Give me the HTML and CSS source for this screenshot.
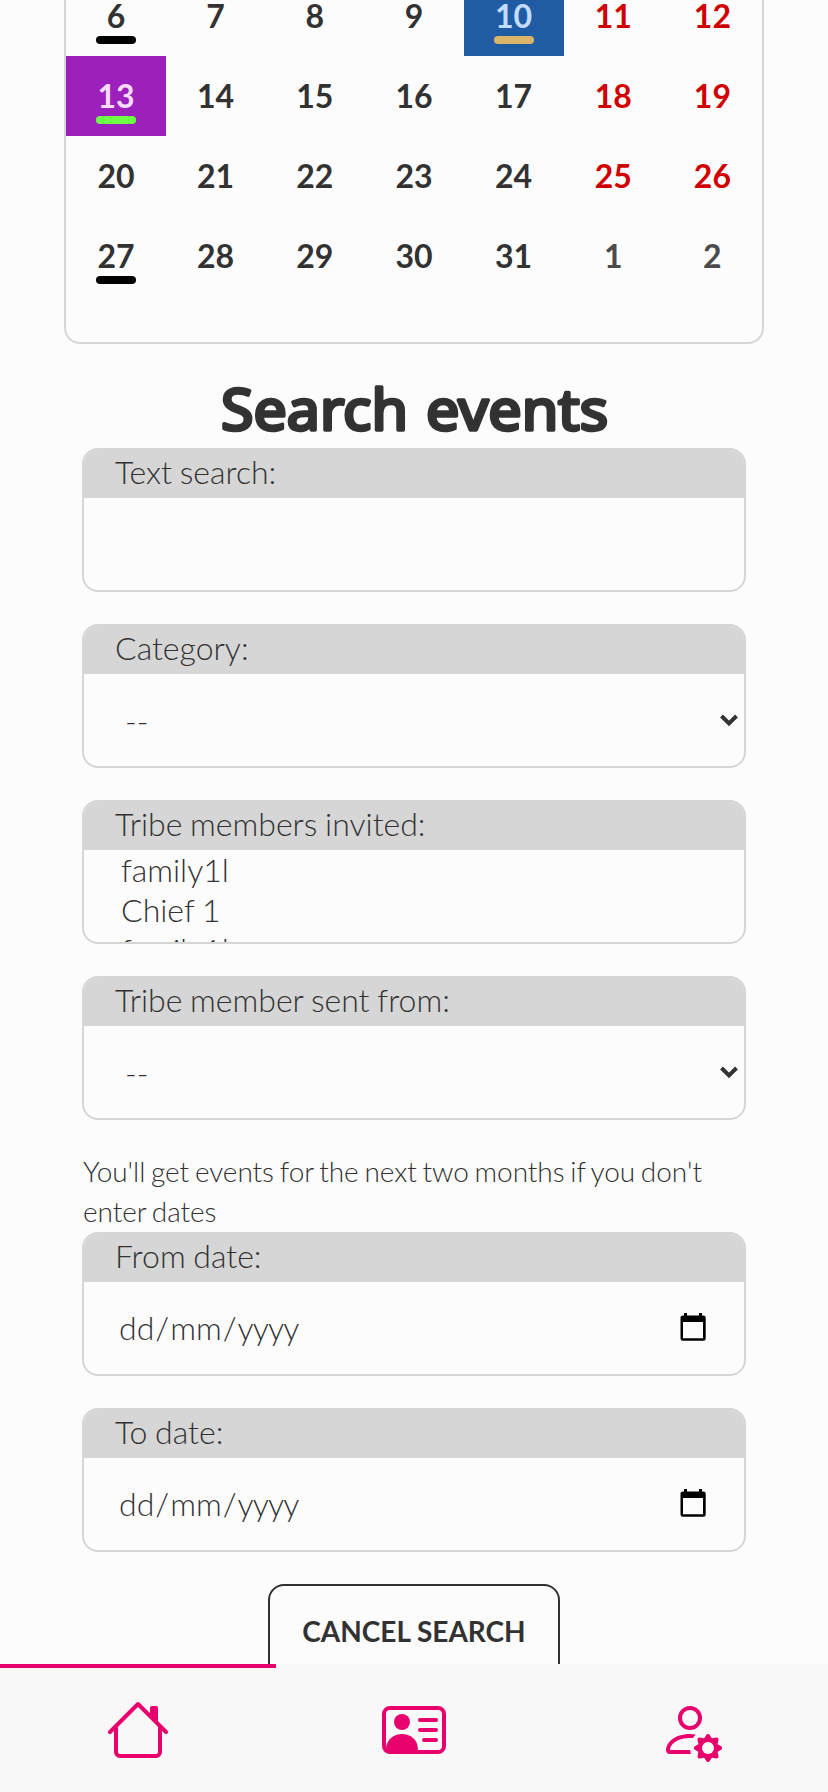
FILE: index.html
```html
<!DOCTYPE html>
<html lang="en">
<head>
<meta charset="utf-8">
<title>Search events</title>
<link rel="stylesheet" href="styles.css">
</head>
<body>
<div class="screen">
  <main class="content">
    <section class="calendar">
      <div class="day mark">6</div><div class="day">7</div><div class="day">8</div><div class="day">9</div><div class="day today mark gold">10</div><div class="day weekend">11</div><div class="day weekend">12</div>
      <div class="day selected mark green">13</div><div class="day">14</div><div class="day">15</div><div class="day">16</div><div class="day">17</div><div class="day weekend">18</div><div class="day weekend">19</div>
      <div class="day">20</div><div class="day">21</div><div class="day">22</div><div class="day">23</div><div class="day">24</div><div class="day weekend">25</div><div class="day weekend">26</div>
      <div class="day mark">27</div><div class="day">28</div><div class="day">29</div><div class="day">30</div><div class="day">31</div><div class="day other">1</div><div class="day other">2</div>
    </section>

    <h2 class="title">
      <svg class="title-art" width="400" height="80" viewBox="0 0 400 80"><text class="title-text" y="58"><tspan x="7" textLength="187" lengthAdjust="spacingAndGlyphs">Search</tspan> <tspan x="212" textLength="182" lengthAdjust="spacingAndGlyphs">events</tspan></text></svg>
    </h2>

    <form class="form">
      <div class="field"><label class="label">Text search:</label><div class="control"></div></div>
      <div class="field"><label class="label">Category:</label><div class="control select"><span>--</span><svg class="chevron" width="18" height="12" viewBox="0 0 18 12"><path d="M1.500 2 9 9.400 16.500 2"/></svg></div></div>
      <div class="field"><label class="label">Tribe members invited:</label><div class="control list"><div>family1l</div><div>Chief 1</div><div>family1l</div></div></div>
      <div class="field"><label class="label">Tribe member sent from:</label><div class="control select"><span>--</span><svg class="chevron" width="18" height="12" viewBox="0 0 18 12"><path d="M1.500 2 9 9.400 16.500 2"/></svg></div></div>
      <p class="hint">You'll get events for the next two months if you don't enter dates</p>
      <div class="field"><label class="label">From date:</label><div class="control date"><span class="date-text">dd<span class="slash">/</span>mm<span class="slash">/</span><span class="year">yyyy</span></span><svg class="date-icon" width="26" height="28" viewBox="0 0 26 28"><path d="M4 0h3v2.500h12V0h3v2.500h1.500A2.300 2.300 0 0 1 25.700 5v20.500a2.300 2.300 0 0 1-2.300 2.300h-20.600A2.300 2.300 0 0 1 .5 25.500V5a2.300 2.300 0 0 1 2.300-2.500H4zM3 9v16.300h20V9z"/></svg></div></div>
      <div class="field"><label class="label">To date:</label><div class="control date"><span class="date-text">dd<span class="slash">/</span>mm<span class="slash">/</span><span class="year">yyyy</span></span><svg class="date-icon" width="26" height="28" viewBox="0 0 26 28"><path d="M4 0h3v2.500h12V0h3v2.500h1.500A2.300 2.300 0 0 1 25.700 5v20.500a2.300 2.300 0 0 1-2.300 2.300h-20.600A2.300 2.300 0 0 1 .5 25.500V5a2.300 2.300 0 0 1 2.300-2.500H4zM3 9v16.300h20V9z"/></svg></div></div>
      <button type="button" class="cancel">CANCEL SEARCH</button>
    </form>
  </main>

  <nav class="nav">
    <a class="tab active">
      <svg width="64" height="64" viewBox="0 0 64 64" class="line"><path d="M4 34 32 6 60 34M10 29v25a4 4 0 0 0 4 4h36a4 4 0 0 0 4-4V29"/><path class="solid" d="M44 18V10a2 2 0 0 1 2-2h4a2 2 0 0 1 2 2v16z"/></svg>
    </a>
    <a class="tab">
      <svg width="64" height="64" viewBox="0 0 64 64" class="line"><rect x="2" y="10" width="60" height="44" rx="6"/><path d="M38 22h16M38 32h16M42 42h12"/><circle class="solid" cx="20" cy="24" r="8"/><path class="solid" d="M4 50C5 41 12 36 20 36s16 5 16 16v4H8z"/></svg>
    </a>
    <a class="tab">
      <svg width="64" height="64" viewBox="0 0 64 64" class="line"><circle cx="32" cy="20" r="10"/><path class="solid" d="M37.800 36.500Q35 36 32 36C16 36 8 45 8 52q0 4 4 4h21q-.8-2-.7-4H12C12 47 18 40 32 40h2.800q1.200-2 3-3.500z"/><path class="gear" d="M50 38 53 42.700 58.500 41.500 57.300 47 62 50 57.300 53 58.500 58.500 53 57.300 50 62 47 57.300 41.500 58.500 42.700 53 38 50 42.700 47 41.500 41.500 47 42.700z"/><circle class="hole" cx="50" cy="50" r="6"/></svg>
    </a>
  </nav>
</div>
</body>
</html>
```
FILE: styles.css
```css
* { box-sizing: border-box; }
html, body { margin: 0; height: 100%; overflow: hidden; }
body {
  background: #fcfcfc;
  color: #323232;
  font-family: Lato, "Open Sans", sans-serif;
}
.screen { display: flex; flex-direction: column; height: 1792px; }
.content { flex: 1; min-height: 0; overflow: hidden; }

.calendar {
  display: grid;
  grid-template-columns: repeat(7, 1fr);
  grid-template-rows: 56px 80px 80px 80px;
  width: 700px;
  margin: 0 auto;
  padding-bottom: 46px;
  border: 2px solid #d6d6d6;
  border-top: 0;
  border-radius: 0 0 16px 16px;
}
.day {
  display: flex;
  flex-direction: column;
  align-items: center;
  padding-top: 24px;
  font-size: 32px;
  font-weight: 700;
  line-height: 32px;
}
.day:nth-child(-n + 7) { padding-top: 0; }
.weekend { color: #d00000; }
.other { color: #4b4b4b; }
.today { width: 100px; background: #205ca4; color: #c4dcff; }
.selected { width: 100px; background: #9c20bc; color: #f8dcff; }
.mark::after {
  content: "";
  flex: none;
  width: 40px;
  height: 8px;
  margin-top: 4px;
  border-radius: 4px;
  background: #000;
}
.gold::after { background: #dcb468; }
.green::after { background: #6cff44; }

.title { display: flex; justify-content: center; margin: 28px 0 0; height: 76px; }
.title-art { overflow: visible; }
.title-text {
  font-family: "Noto Sans", "Open Sans", sans-serif;
  font-size: 56px;
  font-weight: 400;
  fill: #323232;
  stroke: #323232;
  stroke-width: 3.4px;
  stroke-linejoin: round;
}

.form { display: flex; flex-direction: column; width: 664px; margin: 0 auto; }
.field {
  height: 144px;
  margin-bottom: 32px;
  border: 2px solid #d6d6d6;
  border-radius: 16px;
  overflow: hidden;
  font-size: 32px;
  font-weight: 300;
  word-spacing: -1px;
}
.label {
  display: block;
  height: 48px;
  padding-left: 31px;
  background: #d6d6d6;
  line-height: 44px;
}
.control { height: 92px; }
.select {
  display: flex;
  align-items: center;
  justify-content: space-between;
  padding: 0 6px 0 41px;
}
.chevron { margin-top: -1px; fill: none; stroke: #323232; stroke-width: 4; }
.list { padding-left: 37px; line-height: 40px; overflow: hidden; }
.date {
  display: flex;
  align-items: center;
  justify-content: space-between;
  padding: 0 38px 0 35px;
}
.date-text { margin-top: -2px; }
.slash { padding: 0 1px; }
.year { letter-spacing: -0.8px; }
.date-icon { fill: #000; margin-top: -2px; }
.hint {
  margin: -1px 0 1px;
  padding-left: 1px;
  font-size: 28px;
  font-weight: 300;
  line-height: 40px;
  letter-spacing: -0.05px;
  word-spacing: -1.8px;
}
.cancel {
  align-self: center;
  width: 292px;
  height: 96px;
  padding: 0 0 2px;
  border: 2px solid #323232;
  border-radius: 16px;
  background: none;
  color: #323232;
  font: 700 28px Lato, sans-serif;
}

.nav {
  display: grid;
  grid-template-columns: repeat(3, 1fr);
  flex: none;
  height: 128px;
  background: #f8f8f8;
}
.tab {
  display: flex;
  justify-content: center;
  padding-top: 30px;
  border-top: 4px solid transparent;
}
.active { border-top-color: #e8006c; }
.line {
  fill: none;
  stroke: #e8006c;
  stroke-width: 4;
  stroke-linecap: round;
  stroke-linejoin: round;
}
.solid { fill: #e8006c; stroke: none; }
.gear { fill: #e8006c; }
.hole { fill: #f8f8f8; stroke: none; }
```
